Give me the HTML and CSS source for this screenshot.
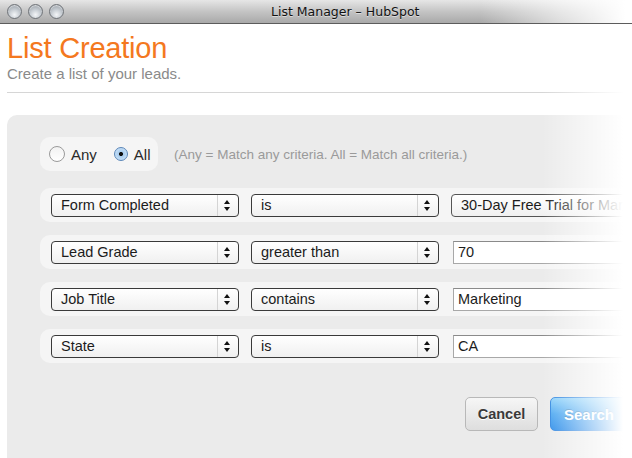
FILE: index.html
```html
<!DOCTYPE HTML>
<html>

<head>
    <meta charset="utf-8">
    <title>List Manager - HubSpot</title>
    <link rel="stylesheet" href="styles.css">
</head>

<body>
    <div class="window">
        <div class="titlebar">
            <div class="lights">
                <span class="light"></span>
                <span class="light"></span>
                <span class="light"></span>
            </div>
            <div class="win-title">List Manager – HubSpot</div>
        </div>

        <div class="header">
            <h1>List Creation</h1>
            <p class="sub">Create a list of your leads.</p>
        </div>
        <div class="rule"></div>

        <div class="panel">
            <div class="match">
                <div class="radios">
                    <label class="radio"><span class="dot"></span>Any</label>
                    <label class="radio on"><span class="dot"></span>All</label>
                </div>
                <span class="hint">(Any = Match any criteria. All = Match all criteria.)</span>
            </div>

            <div class="row">
                <div class="select wide">Form Completed<span class="arrows"></span></div>
                <div class="select wide">is<span class="arrows"></span></div>
                <div class="select value">30-Day Free Trial for Marketing</div>
            </div>
            <div class="row">
                <div class="select wide">Lead Grade<span class="arrows"></span></div>
                <div class="select wide">greater than<span class="arrows"></span></div>
                <div class="field">70</div>
            </div>
            <div class="row">
                <div class="select wide">Job Title<span class="arrows"></span></div>
                <div class="select wide">contains<span class="arrows"></span></div>
                <div class="field">Marketing</div>
            </div>
            <div class="row">
                <div class="select wide">State<span class="arrows"></span></div>
                <div class="select wide">is<span class="arrows"></span></div>
                <div class="field">CA</div>
            </div>

            <div class="actions">
                <button class="btn cancel">Cancel</button>
                <button class="btn search">Search</button>
            </div>
        </div>

        <div class="fade"></div>
    </div>
</body>

</html>
```

FILE: styles.css
```css
html, body {
	background: #ffffff;
	padding: 0;
	border: 0;
	margin: 0;
	height: 100%;
}

body {
    overflow: hidden;
    font-family: "Liberation Sans", Arial, sans-serif;
}

.window {
    position: relative;
    width: 632px;
    height: 458px;
    overflow: hidden;
}

/* title bar */
.titlebar {
    height: 23px;
    display: flex;
    align-items: center;
    background:
        linear-gradient(to right, rgba(255,255,255,0) 480px, rgba(255,255,255,.6) 560px, #ffffff 625px),
        linear-gradient(#e6e6e6, #c4c4c4 50%, #a9a9a9);
    border-bottom: 1px solid #5c5c5c;
}
.lights {
    display: flex;
    gap: 6px;
    padding-left: 7px;
}
.light {
    width: 15px;
    height: 15px;
    border-radius: 50%;
    box-sizing: border-box;
    border: 1px solid #6f7378;
    background: radial-gradient(circle at 50% 75%, #f4f6f8 0, #c6ccd2 45%, #8c939a 100%);
    box-shadow: inset 0 1px 1px rgba(255,255,255,.6);
}
.win-title {
    margin-left: 207px;
    font-family: "DejaVu Sans", sans-serif;
    font-size: 12.5px;
    color: #111111;
    text-shadow: 0 1px 0 rgba(255,255,255,.5);
}

/* header */
.header {
    padding: 8px 7px 0;
}
.header h1 {
    margin: 0;
    font-size: 29px;
    line-height: 32px;
    font-weight: normal;
    color: #f47820;
    letter-spacing: -0.2px;
}
.header .sub {
    margin: 1px 0 0;
    font-size: 15px;
    line-height: 17px;
    color: #8a8a8a;
}
.rule {
    margin: 10px 0 0 7px;
    height: 1px;
    border-top: 1px solid #d6d6d6;
}

/* criteria panel */
.panel {
    margin: 21px 0 0 7px;
    width: 700px;
    height: 400px;
    background: #ebebeb;
    border-radius: 10px 0 0 0;
    padding: 22px 0 0 33px;
    box-sizing: border-box;
}
.match {
    display: flex;
    align-items: center;
    gap: 16px;
    margin-bottom: 17px;
}
.radios {
    display: flex;
    align-items: center;
    gap: 17px;
    height: 34px;
    width: 118px;
    box-sizing: border-box;
    padding-left: 9px;
    background: #f5f5f5;
    border-radius: 10px;
}
.radio {
    display: flex;
    align-items: center;
    gap: 6px;
    font-size: 15px;
    color: #2a2a2a;
}
.radio .dot {
    width: 16px;
    height: 16px;
    box-sizing: border-box;
    border-radius: 50%;
    border: 1px solid #9a9a9a;
    background: linear-gradient(#f2f2f2, #ffffff);
}
.radio.on .dot {
    width: 14px;
    height: 14px;
    border-color: #5a86b8;
    background: radial-gradient(circle, #111 0, #111 1.6px, #a9cdee 2.4px, #d8eafb 100%);
}
.hint {
    font-size: 13.5px;
    color: #9a9a9a;
}

.row {
    display: flex;
    align-items: center;
    gap: 12px;
    height: 34px;
    padding-left: 11px;
    margin-bottom: 13px;
    background: #f5f5f5;
    border-radius: 10px 0 0 10px;
}
.select {
    position: relative;
    height: 23px;
    box-sizing: border-box;
    border: 1px solid #3a3a3a;
    border-radius: 4px;
    background: linear-gradient(#ffffff, #f0f0f0);
    font-size: 14.5px;
    line-height: 21px;
    color: #1c1c1c;
    padding-left: 9px;
    white-space: nowrap;
    overflow: hidden;
}
.select.wide {
    width: 188px;
}
.select.value {
    width: 220px;
    border-color: #555;
}
.arrows {
    position: absolute;
    top: 0;
    right: 0;
    width: 20px;
    height: 21px;
    border-left: 1px solid #d4d4d4;
}
.arrows::before,
.arrows::after {
    content: "";
    position: absolute;
    left: 6px;
    border-left: 3.5px solid transparent;
    border-right: 3.5px solid transparent;
}
.arrows::before {
    top: 5px;
    border-bottom: 4px solid #111;
}
.arrows::after {
    top: 12px;
    border-top: 4px solid #111;
}
.field {
    width: 220px;
    height: 23px;
    box-sizing: border-box;
    margin-left: 2px;
    border: 1px solid #a8a8a8;
    border-top-color: #8a8a8a;
    background: #ffffff;
    font-size: 14.5px;
    line-height: 21px;
    color: #1c1c1c;
    padding-left: 4px;
}

.actions {
    display: flex;
    gap: 12px;
    margin: 34px 0 0 425px;
}
.btn {
    height: 34px;
    box-sizing: border-box;
    border-radius: 5px;
    font-family: "Liberation Sans", Arial, sans-serif;
    font-size: 14.5px;
    font-weight: bold;
    padding: 0;
}
.btn.cancel {
    width: 73px;
    color: #3a3a3a;
    border: 1px solid #b8b8b8;
    background: linear-gradient(#f6f6f6, #dedede);
    text-shadow: 0 1px 0 #ffffff;
}
.btn.search {
    width: 110px;
    color: #ffffff;
    border: 1px solid #2f86e0;
    background: linear-gradient(#8fd2fa, #4aa6f0 50%, #2d8de9);
    text-shadow: 0 -1px 0 rgba(0,0,0,.2);
    text-align: left;
    padding-left: 13px;
    font-size: 15px;
}

/* right edge fades out to white */
.fade {
    position: absolute;
    top: 24px;
    right: 0;
    width: 90px;
    height: 434px;
    background: linear-gradient(to right, rgba(255,255,255,0) 0, rgba(255,255,255,.5) 45%, #ffffff 90%);
}
```
